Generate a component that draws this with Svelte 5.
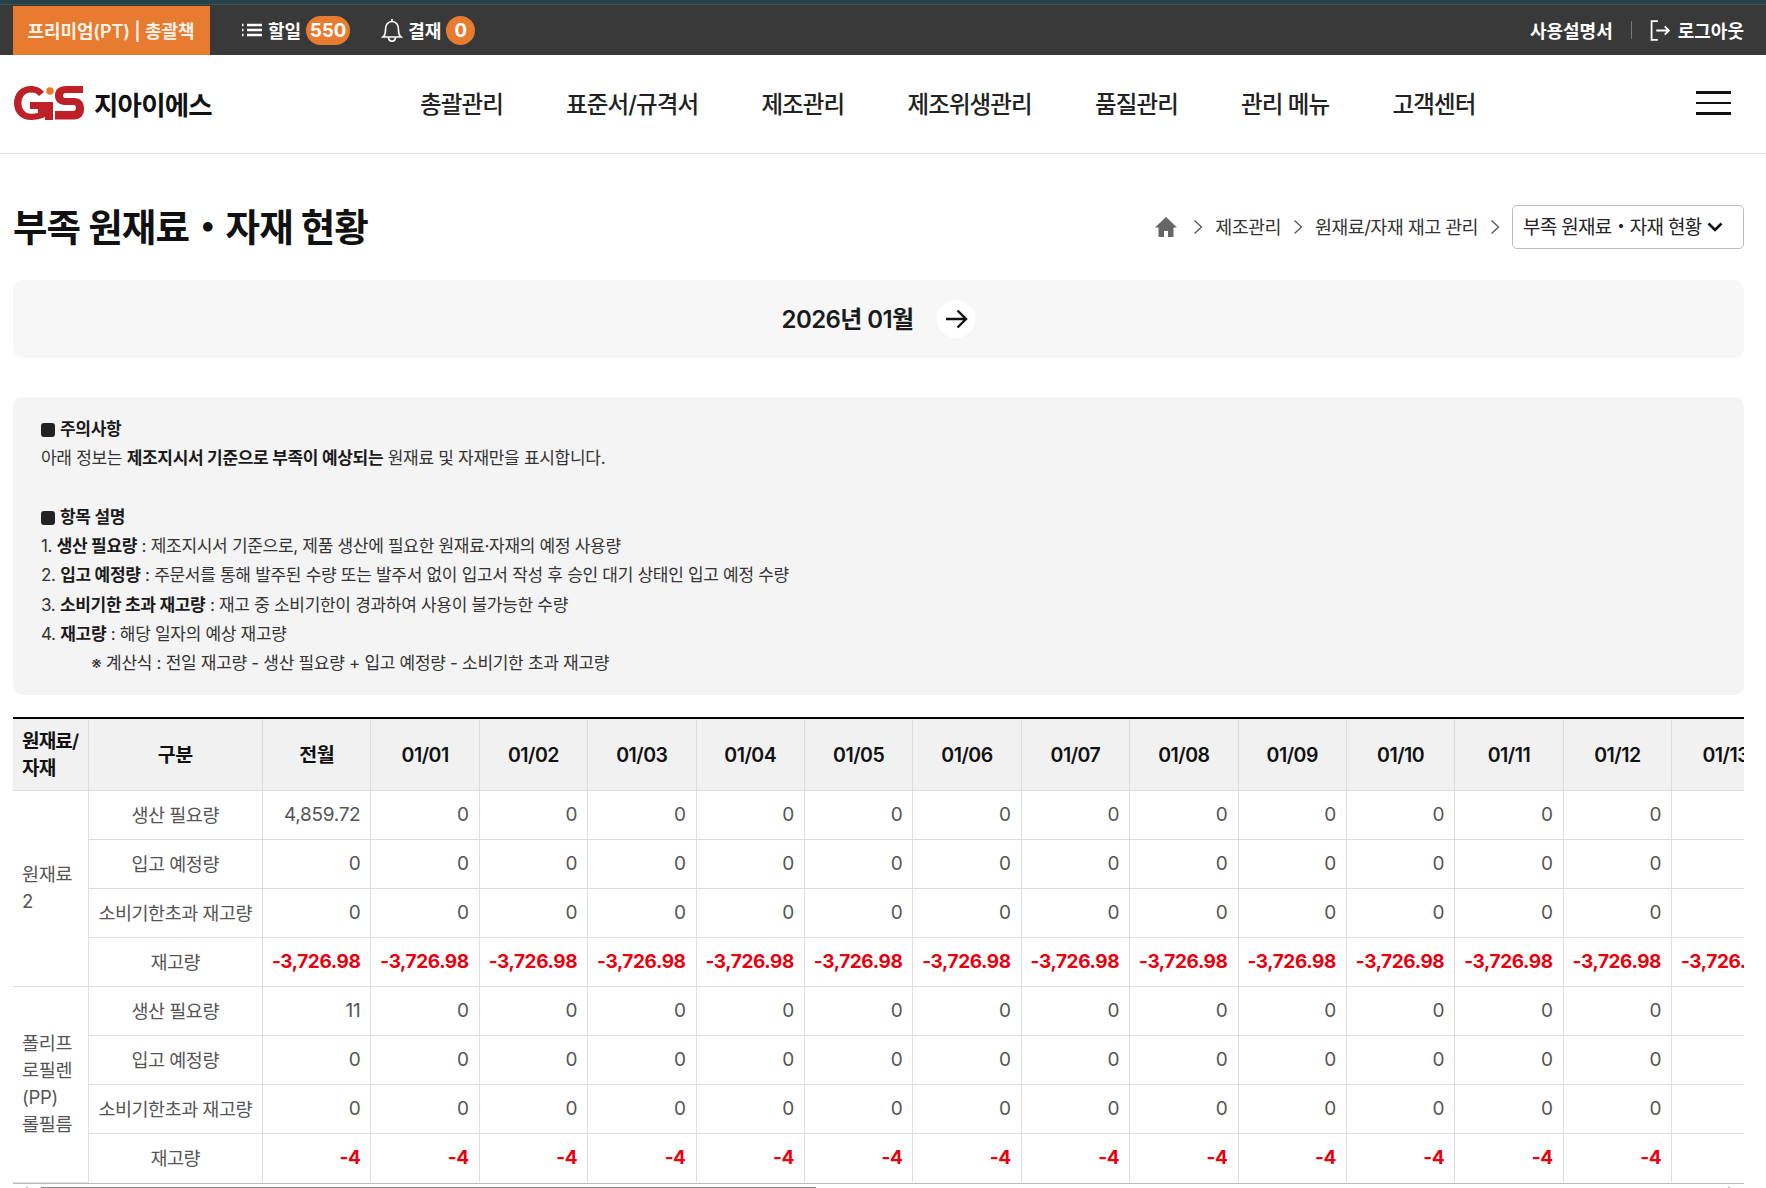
<script>
  const cols = ['전월', ...Array.from({ length: 13 }, (_, i) => `01/${String(i + 1).padStart(2, '0')}`)];
  const labels = ['생산 필요량', '입고 예정량', '소비기한초과 재고량', '재고량'];
  const materials = [
    { name: ['원재료', '2'], first: '4,859.72', stock: '-3,726.98' },
    { name: ['폴리프', '로필렌', '(PP)', '롤필름'], first: '11', stock: '-4' }
  ];
  const nav = ['총괄관리', '표준서/규격서', '제조관리', '제조위생관리', '품질관리', '관리 메뉴', '고객센터'];
  const rowValue = (m, r, c) => {
    if (r === 3) return m.stock;
    if (r === 0 && c === 0) return m.first;
    return '0';
  };
</script>

<div class="page">
  <div class="strip"></div>
  <div class="topbar">
    <div class="plan">프리미엄(PT) | 총괄책</div>
    <div class="top-item first">
      <svg width="22" height="16" viewBox="0 0 22 16" fill="none" stroke="#fff">
        <path d="M1 3h2M1 8h2M1 13h2" stroke-width="2.400" stroke-dasharray="1.5 0.5" />
        <path d="M6 3h15M6 8h15M6 13h15" stroke-width="2.400" />
      </svg>
      <span>할일</span><b class="pill">550</b>
    </div>
    <div class="top-item second">
      <svg width="22" height="26" viewBox="0 0 22 26" fill="none" stroke="#fff" stroke-width="1.700">
        <path d="M2 20c1.800-1.500 2.500-3 2.500-7 0-5 2.500-8.500 6.500-8.500s6.500 3.500 6.500 8.500c0 4 .7 5.500 2.500 7z" />
        <path d="M11 2v2.500M7.500 20c0 5.500 7 5.500 7 0" />
      </svg>
      <span>결재</span><b class="pill round">0</b>
    </div>
    <div class="top-right">
      <span>사용설명서</span>
      <i class="sep"></i>
      <svg width="21" height="21" viewBox="0 0 20 20" fill="none" stroke="#fff" stroke-width="1.700">
        <path d="M7.500 1H1.500v18h6M6 10h12M14 6l4 4-4 4" />
      </svg>
      <span>로그아웃</span>
    </div>
  </div>

  <header class="header">
    <div class="logo">
      <svg width="71" height="36" viewBox="0 0 71 36">
        <path d="M31 7C28 3 23 1 18 1 8 1 1 8 1 18s7 17 17 17c5 0 10-1 14-3V17H17v7h8v4c-2 .4-4 .8-7 .8-6 0-9.500-5-9.500-10.800S12 7.500 18 7.500c3.500 0 6 1 8 3.500z" fill="#bd2026" />
        <circle cx="37" cy="6" r="3.800" fill="#e87b2e" />
        <rect x="32" y="17" width="8" height="18" fill="#bd2026" />
        <path d="M70 1H53c-7 0-11 3.500-11 9.500S46 20 52 20h8c2 0 3 .8 3 2.500S62 26 60 26H42v8.500h19c6.500 0 10-4 10-11S67 13 61 13h-8c-2 0-3-.6-3-2.300S51 8 53 8h17z" fill="#bd2026" />
      </svg>
      <span class="logo-text">지아이에스</span>
    </div>
    <nav class="nav">
      {#each nav as n}<span>{n}</span>{/each}
    </nav>
    <div class="burger"><i></i><i></i><i></i></div>
  </header>

  <main class="main">
    <div class="title-row">
      <h1>부족 원재료・자재 현황</h1>
      <div class="crumbs">
        <svg width="24" height="22" viewBox="0 0 24 22" fill="#666"><path d="M12 1 1 11.500h3.500V21H10v-6h4v6h5.500v-9.500H23z" /></svg>
        <svg class="chev home-chev" width="10" height="16" viewBox="0 0 10 16" fill="none" stroke="#555" stroke-width="1.300"><path d="m1.500 1.500 7 6.500-7 6.500" /></svg>
        <span>제조관리</span>
        <svg class="chev" width="10" height="16" viewBox="0 0 10 16" fill="none" stroke="#555" stroke-width="1.300"><path d="m1.500 1.500 7 6.500-7 6.500" /></svg>
        <span>원재료/자재 재고 관리</span>
        <svg class="chev" width="10" height="16" viewBox="0 0 10 16" fill="none" stroke="#555" stroke-width="1.300"><path d="m1.500 1.500 7 6.500-7 6.500" /></svg>
        <div class="select">
          <span>부족 원재료・자재 현황</span>
          <svg width="16" height="10" viewBox="0 0 16 10" fill="none" stroke="#111" stroke-width="2.600"><path d="m1.500 1.500 6.500 6.500 6.500-6.500" /></svg>
        </div>
      </div>
    </div>

    <div class="datebar">
      <span class="date">2026년 01월</span>
      <span class="next">
        <svg width="23" height="20" viewBox="0 0 23 20" fill="none" stroke="#111" stroke-width="2.400"><path d="M1 10h20M12.500 1.500 21 10l-8.500 8.500" /></svg>
      </span>
    </div>

    <section class="notes">
      <p class="h"><i class="sq"></i>주의사항</p>
      <p>아래 정보는 <b>제조지시서 기준으로 부족이 예상되는</b> 원재료 및 자재만을 표시합니다.</p>
      <p>&nbsp;</p>
      <p class="h"><i class="sq"></i>항목 설명</p>
      <p>1. <b>생산 필요량</b> : 제조지시서 기준으로, 제품 생산에 필요한 원재료·자재의 예정 사용량</p>
      <p>2. <b>입고 예정량</b> : 주문서를 통해 발주된 수량 또는 발주서 없이 입고서 작성 후 승인 대기 상태인 입고 예정 수량</p>
      <p>3. <b>소비기한 초과 재고량</b> : 재고 중 소비기한이 경과하여 사용이 불가능한 수량</p>
      <p>4. <b>재고량</b> : 해당 일자의 예상 재고량</p>
      <p class="calc">※ 계산식 : 전일 재고량 - 생산 필요량 + 입고 예정량 - 소비기한 초과 재고량</p>
    </section>

    <div class="table-wrap">
      <table>
        <colgroup>
          <col class="c-a" /><col class="c-b" />
          {#each cols as _}<col class="c-n" />{/each}
        </colgroup>
        <thead>
          <tr>
            <th class="left">원재료/<br />자재</th>
            <th>구분</th>
            {#each cols as c}<th>{c}</th>{/each}
          </tr>
        </thead>
        <tbody>
          {#each materials as m}
            {#each labels as label, r}
              <tr>
                {#if r === 0}
                  <td class="mat" rowspan="4">{#each m.name as line, i}{#if i}<br />{/if}{line}{/each}</td>
                {/if}
                <td class="lab">{label}</td>
                {#each cols as _, c}
                  <td class="num" class:neg={r === 3}>{rowValue(m, r, c)}</td>
                {/each}
              </tr>
            {/each}
          {/each}
        </tbody>
      </table>
    </div>
    <div class="scrollbar">
      <b class="arrow left"></b>
      <i></i>
      <b class="arrow right"></b>
    </div>
  </main>
</div>

<style>
  :global(body) {
    margin: 0;
    background: #fff;
    font-family: Inter, "Noto Sans CJK KR", sans-serif;
    color: #111;
    overflow: hidden;
  }
  .page { width: 1766px; height: 1188px; overflow: hidden; }
  .strip { height: 5px; background: #25424a; border-bottom: 1px solid #3f4f52; box-sizing: border-box; }
  .topbar {
    height: 50px;
    background: #393939;
    color: #fff;
    display: flex;
    align-items: center;
    padding: 0 22px 0 13px;
    font-size: 18px;
    font-weight: 600;
  }
  .plan {
    width: 197px;
    height: 49px;
    box-sizing: border-box;
    padding: 0 1px 2px 0;
    margin-top: 1px;
    background: #e77c30;
    display: flex;
    align-items: center;
    justify-content: center;
    color: #fdf3ea;
    letter-spacing: -0.1px;
  }
  .top-item { display: flex; align-items: center; gap: 5px; }
  .top-item.first { margin-left: 31px; }
  .top-item.second { margin-left: 31px; }
  .pill {
    background: #e77c30;
    border-radius: 15px;
    width: 44px;
    height: 29px;
    display: flex;
    align-items: center;
    justify-content: center;
    font-size: 18.500px;
    font-weight: 700;
  }
  .pill.round { width: 29px; }
  .top-right { margin-left: auto; display: flex; align-items: center; gap: 7px; }
  .top-right span { margin-top: -1px; }
  .sep { width: 1px; height: 18px; background: #777; margin: 0 11px; }
  .header {
    height: 99px;
    box-sizing: border-box;
    border-bottom: 1px solid #dedede;
    display: flex;
    align-items: center;
    padding: 0 35px 2px 13px;
  }
  .logo { width: 407px; display: flex; align-items: center; gap: 10px; }
  .logo-text { font-size: 26.500px; font-weight: 700; letter-spacing: -0.8px; color: #111; }
  .nav { display: flex; gap: 63.200px; font-size: 23.500px; font-weight: 500; letter-spacing: -0.900px; color: #222; }
  .burger { margin-left: auto; width: 35px; display: flex; flex-direction: column; gap: 8px; }
  .burger i { height: 3px; background: #111; display: block; }
  .burger i:nth-child(2) { height: 2px; }
  .main { padding: 0 22px 0 13px; }
  .title-row {
    height: 126px;
    box-sizing: border-box;
    padding-top: 16px;
    display: flex;
    justify-content: space-between;
    align-items: center;
  }
  h1 { margin: -2px 0 0; font-size: 37.500px; font-weight: 700; letter-spacing: -0.9px; color: #111; }
  .crumbs { display: flex; align-items: center; margin-top: 3px; font-size: 18.500px; color: #333; letter-spacing: -0.6px; }
  .crumbs span { margin-top: -2px; }
  .crumbs .chev { margin: 0 12px; }
  .crumbs .home-chev { margin: 0 12px 0 15px; }
  .select {
    width: 232px;
    height: 44px;
    box-sizing: border-box;
    border: 1px solid #bbb;
    border-radius: 5px;
    display: flex;
    align-items: center;
    gap: 5px;
    padding: 0 0 0 10px;
    color: #222;
    font-size: 19px;
    letter-spacing: -0.7px;
    white-space: nowrap;
  }
  .datebar {
    height: 78px;
    background: #f7f7f7;
    border-radius: 10px;
    display: flex;
    align-items: center;
    justify-content: center;
    gap: 24px;
  }
  .date { font-size: 24px; font-weight: 600; letter-spacing: -0.6px; color: #1a1a1a; margin-top: -3px; }
  .next {
    width: 38px;
    height: 38px;
    border-radius: 50%;
    background: #fff;
    display: flex;
    align-items: center;
    justify-content: center;
  }
  .notes {
    margin-top: 39px;
    height: 298px;
    box-sizing: border-box;
    background: #f4f4f4;
    border-radius: 10px;
    padding: 18px 28px 0;
    font-size: 17px;
    letter-spacing: -0.3px;
    color: #333;
  }
  .notes p { margin: 0; height: 29.300px; line-height: 29.300px; white-space: nowrap; }
  .notes b { font-weight: 700; color: #1a1a1a; }
  .notes .h { font-weight: 700; color: #1a1a1a; display: flex; align-items: center; gap: 5px; }
  .sq { width: 14px; height: 14px; background: #222; border-radius: 3px; display: block; }
  .notes .calc { padding-left: 50px; }
  .table-wrap { margin-top: 22px; overflow: hidden; border-top: 2px solid #000; border-bottom: 1px solid #bbb; }
  table { border-collapse: collapse; table-layout: fixed; width: 1767.100px; }
  .c-a { width: 75px; }
  .c-b { width: 174.500px; }
  .c-n { width: 108.400px; }
  th {
    height: 71px;
    box-sizing: border-box;
    background: #f1f1f1;
    border: 1px solid #dcdcdc;
    border-top: 0;
    font-size: 19.500px;
    font-weight: 600;
    line-height: 27px;
    letter-spacing: -0.5px;
    color: #111;
    padding: 2px 0 0;
  }
  th.left { text-align: left; padding-left: 9px; border-left: 0; font-size: 19px; letter-spacing: -0.8px; }
  td {
    height: 49px;
    border: 1px solid #dedede;
    font-size: 19px;
    color: #555;
    padding: 0;
    box-sizing: border-box;
    letter-spacing: -0.3px;
  }
  td.mat { text-align: left; padding-left: 9px; border-left: 0; font-size: 18.500px; line-height: 27px; }
  td.lab { text-align: center; font-size: 18.500px; letter-spacing: -0.5px; padding-bottom: 1px; }
  td.num { text-align: right; padding-right: 10px; font-weight: 400; }
  td.neg { color: #e8000f; font-weight: 700; letter-spacing: -0.4px; white-space: nowrap; }
  tbody tr:last-child td { border-bottom: 0; }
  .scrollbar { height: 5px; position: relative; background: #fff; }
  .scrollbar i { position: absolute; left: 28px; top: 3px; width: 775px; height: 2px; background: #8a8a8a; display: block; }
  .arrow { position: absolute; top: 3px; width: 0; height: 0; border-left: 3px solid transparent; border-right: 3px solid transparent; border-bottom: 2px solid #888; }
  .arrow.left { left: 11px; }
  .arrow.right { left: 1713px; }
</style>
